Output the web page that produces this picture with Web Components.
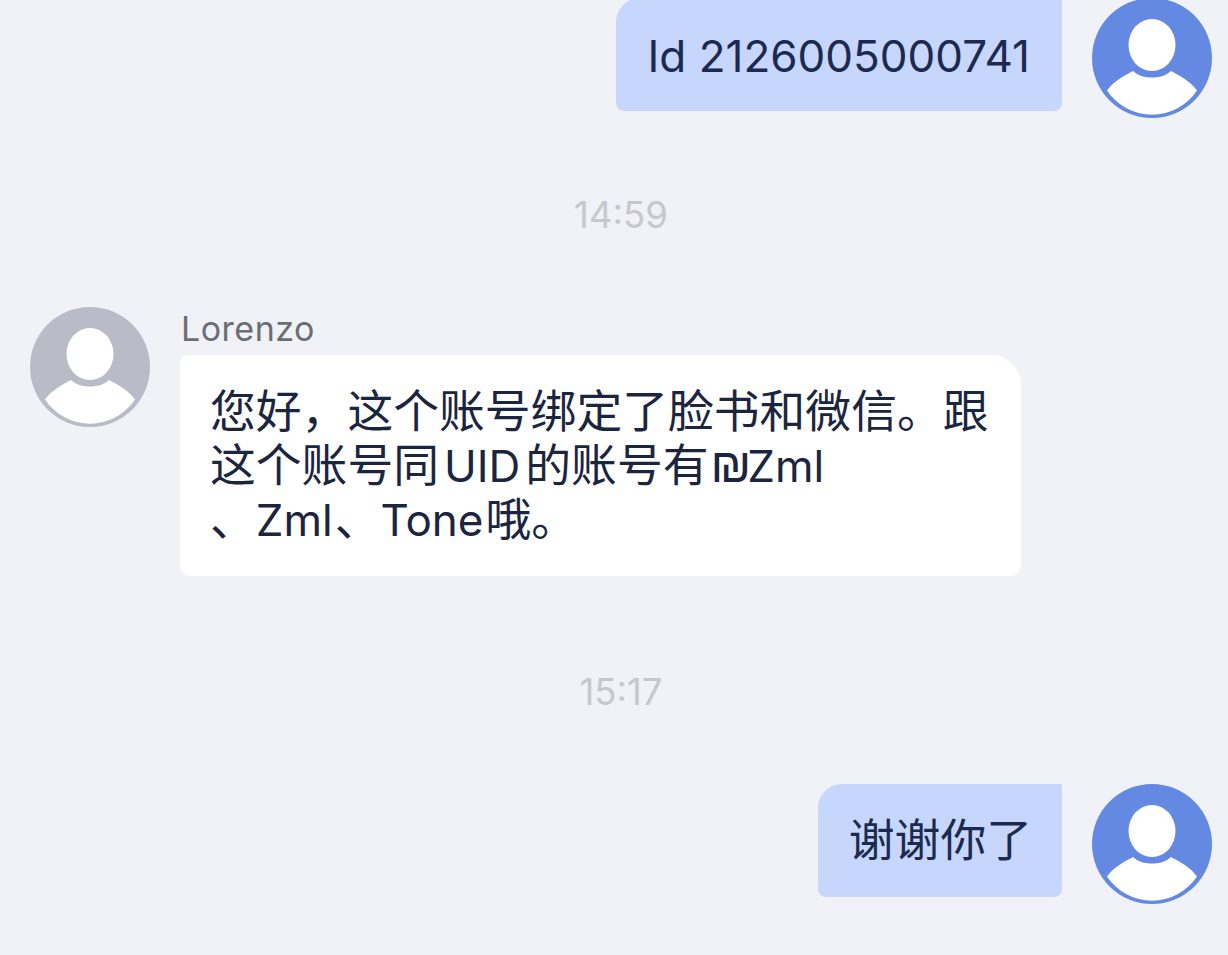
<!doctype html>
<html lang="zh">
<head>
<meta charset="utf-8">
<title>Chat</title>
<style>
  html, body { margin: 0; height: 955px; overflow: hidden; background: #f0f2f7; }
  body {
    font-family: Inter, "Noto Sans CJK SC", sans-serif;
    display: flex;
    flex-direction: column;
    color: #1e2844;
  }
</style>
</head>
<body>
<chat-thread>
  <chat-row side="me" style="margin-top:-2px">
    <chat-bubble side="me">Id 2126005000741</chat-bubble>
  </chat-row>
  <chat-stamp style="margin-top:77px">14:59</chat-stamp>
  <chat-row name="Lorenzo" style="margin-top:72px">
    <chat-bubble style="--pad:30px 32px 29px 30px"><zh-text>您好，这个账号绑定了脸书和微信。跟</zh-text><br><zh-text>这个账号同</zh-text><span style="margin:0 5px 0 5px">UID</span><zh-text>的账号有</zh-text><sign-text style="margin:0 -4px 0 2px">₪</sign-text>Zml<br><zh-text>、</zh-text>Zml<zh-text style="margin-left:2px">、</zh-text>Tone<zh-text style="margin-left:2px">哦。</zh-text></chat-bubble>
  </chat-row>
  <chat-stamp style="margin-top:96px">15:17</chat-stamp>
  <chat-row side="me" style="margin-top:72px">
    <chat-bubble side="me" style="--pad:30px 30px 29px 31px"><zh-text>谢谢你了</zh-text></chat-bubble>
  </chat-row>
</chat-thread>

<script>
// Default avatar: same silhouette, colour comes from the host.
class ChatAvatar extends HTMLElement {
  connectedCallback() {
    const root = this.shadowRoot || this.attachShadow({ mode: "open" });
    root.innerHTML = `
      <style>
        :host { display: block; width: 120px; height: 120px; flex: none; }
        svg { display: block; }
      </style>
      <svg width="120" height="120" viewBox="0 0 120 120">
        <circle cx="60" cy="60" r="60" fill="var(--avatar, #b9bcc7)"/>
        <ellipse cx="60" cy="47" rx="23.5" ry="26" fill="#fff"/>
        <path d="M15 92.500C21 84 31 78 41 73C46 77.500 52 79.500 60 79.500C68 79.500 74 77.500 79 73C89 78 99 84 105 92.500A54 54 0 0 1 15 92.500Z" fill="#fff"/>
      </svg>`;
  }
}
customElements.define("chat-avatar", ChatAvatar);

// CJK runs sit a little larger than the latin text around them.
// line-height 1 so they don't push the 54px lines apart.
// No whitespace before the slot: these are inline and it would render as a space.
class ZhText extends HTMLElement {
  constructor() {
    super();
    this.attachShadow({ mode: "open" }).innerHTML =
      `<style>:host { display: inline; font-size: 45.800px; line-height: 1; font-family: "Noto Sans CJK SC", sans-serif; }</style><slot></slot>`;
  }
}
customElements.define("zh-text", ZhText);

class SignText extends HTMLElement {
  constructor() {
    super();
    this.attachShadow({ mode: "open" }).innerHTML =
      `<style>:host { display: inline; font-family: "Liberation Sans", sans-serif; font-size: 48px; line-height: 1; }</style><slot></slot>`;
  }
}
customElements.define("sign-text", SignText);

class ChatBubble extends HTMLElement {
  constructor() {
    super();
    this.attachShadow({ mode: "open" }).innerHTML = `
      <style>
        :host {
          display: block;
          padding: var(--pad, 31px 32px 28px 32px);
          font-size: 44px;
          line-height: 54px;
          white-space: nowrap;
          text-autospace: no-autospace;
          background: #fff;
          border-radius: 8px 30px 10px 10px;
          color: #1c2540;
        }
        :host([side="me"]) {
          background: #c7d6fd;
          border-radius: 24px 0 8px 8px;
          color: #1c2a50;
        }
      </style>
      <slot></slot>`;
  }
}
customElements.define("chat-bubble", ChatBubble);

class ChatRow extends HTMLElement {
  constructor() {
    super();
    const name = this.getAttribute("name");
    this.attachShadow({ mode: "open" }).innerHTML = `
      <style>
        :host { display: flex; gap: 30px; align-items: flex-start; padding: 0 16px 0 30px; }
        :host([side="me"]) { flex-direction: row-reverse; --avatar: #6489e3; }
        .name {
          font-size: 34px;
          line-height: 40px;
          height: 46px;
          padding: 2px 0 0 1px;
          color: #6b6d75;
          letter-spacing: .5px;
        }
      </style>
      <chat-avatar></chat-avatar>
      <div class="body">
        ${name ? `<div class="name">${name}</div>` : ""}
        <slot></slot>
      </div>`;
  }
}
customElements.define("chat-row", ChatRow);

class ChatStamp extends HTMLElement {
  constructor() {
    super();
    this.attachShadow({ mode: "open" }).innerHTML = `
      <style>
        :host {
          display: block;
          text-align: center;
          font-size: 36.500px;
          line-height: 40px;
          color: #c5c8cf;
          padding-left: 14px;
        }
      </style>
      <slot></slot>`;
  }
}
customElements.define("chat-stamp", ChatStamp);

class ChatThread extends HTMLElement {
  constructor() {
    super();
    this.attachShadow({ mode: "open" }).innerHTML = `
      <style>
        :host { display: flex; flex-direction: column; }
      </style>
      <slot></slot>`;
  }
}
customElements.define("chat-thread", ChatThread);
</script>
</body>
</html>
